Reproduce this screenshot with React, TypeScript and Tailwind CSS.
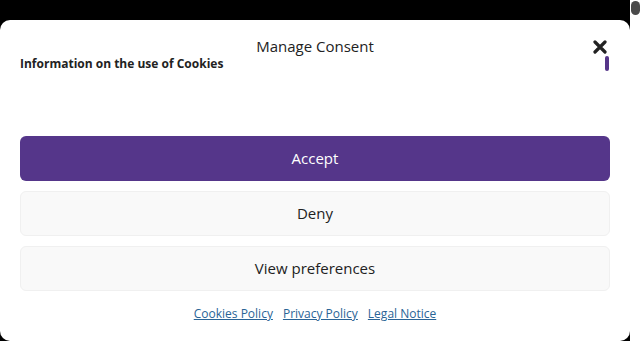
export default function App() {
  return (
    <div className="flex h-[341px] w-[640px] overflow-hidden bg-white font-['Open_Sans',sans-serif] text-[#222222]">
      {/* Backdrop + modal */}
      <div className="flex w-[630px] flex-col bg-black pt-[20px]">
        <div className="flex flex-1 flex-col rounded-[10px] bg-white px-[20px]">
          {/* Header */}
          <div className="relative flex h-[36px] items-start justify-center pt-[16px]">
            <span className="text-[15px] leading-[20px]">Manage Consent</span>
            <button aria-label="Close" className="absolute right-[3px] top-[20px] text-[#222222]">
              <svg className="h-[14px] w-[14px]" viewBox="0 0 14 14" fill="none" stroke="currentColor">
                <path strokeWidth={3.2} strokeLinecap="round" d="M2 2l10 10M12 2L2 12" />
              </svg>
            </button>
          </div>

          {/* Scrollable message */}
          <div className="flex h-[80px] items-start justify-between">
            <p className="-mt-[1px] text-[12px] font-bold leading-[17px]">Information on the use of Cookies</p>
            <div className="mr-[1px] h-[15px] w-[4px] rounded-full bg-[#563689]" />
          </div>

          {/* Buttons */}
          <div className="flex flex-col gap-[10px]">
            <button className="h-[45px] rounded-[6px] bg-[#55368a] text-[15px] text-white">Accept</button>
            <button className="h-[45px] rounded-[6px] border border-[#f0f0f0] bg-[#f9f9f9] text-[15px] text-[#222222]">
              Deny
            </button>
            <button className="h-[45px] rounded-[6px] border border-[#f0f0f0] bg-[#f9f9f9] text-[15px] text-[#222222]">
              View preferences
            </button>
          </div>

          {/* Policy links */}
          <div className="mt-[14px] flex justify-center gap-[10px] text-[12px] leading-[17px] text-[#2a6496]">
            <a className="underline" href="#">Cookies Policy</a>
            <a className="underline" href="#">Privacy Policy</a>
            <a className="underline" href="#">Legal Notice</a>
          </div>
        </div>
      </div>

      {/* Page scrollbar */}
      <div className="flex w-[10px] flex-col items-center pt-[1px]">
        <div className="h-[14px] w-[9px] rounded-full bg-[#4a4a4a]" />
      </div>
    </div>
  );
}
